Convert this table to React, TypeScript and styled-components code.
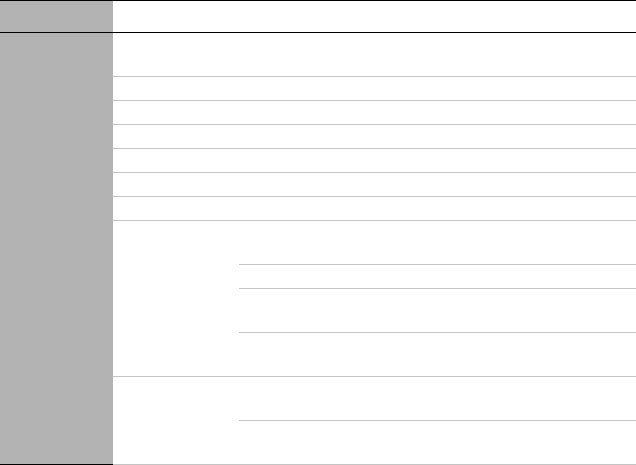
import React from 'react';
import styled, { createGlobalStyle } from 'styled-components';

const GlobalStyle = createGlobalStyle`
  html, body {
    margin: 0;
    padding: 0;
    background: #ffffff;
    font-family: "Liberation Sans", Arial, sans-serif;
  }
`;

const RULE = '#c4c4c4';
const SHADE = '#b3b3b3';

const Table = styled.div`
  width: 636px;
  border-top: 1px solid #000;
  overflow: hidden;
`;

const HeaderRow = styled.div`
  display: grid;
  grid-template-columns: 113px 1fr;
  height: 31px;
  border-bottom: 1px solid #000;
`;

const Shaded = styled.div`
  background: ${SHADE};
`;

const SideCell = styled(Shaded)`
  border-bottom: 1px solid #000;
`;

const Body = styled.div`
  display: grid;
  grid-template-columns: 113px 1fr;
`;

const Rows = styled.div`
  display: flex;
  flex-direction: column;
`;

type RowProps = {
  h: number;
  last?: boolean;
};

const Row = styled.div<RowProps>`
  height: ${props => props.h}px;
  border-bottom: ${props => props.last ? 'none' : `1px solid ${RULE}`};
`;

const Group = styled.div`
  display: grid;
  grid-template-columns: 126px 1fr;
  border-bottom: 1px solid ${RULE};
`;

const SubRows = styled.div`
  display: flex;
  flex-direction: column;
`;

const simpleRows = [43, 23, 23, 23, 23, 23, 23];
const groups = [
  [43, 23, 43, 43],
  [43, 43],
];

export default function App() {
  return (
    <>
      <GlobalStyle />
      <Table>
        <HeaderRow>
          <Shaded />
          <div />
        </HeaderRow>
        <Body>
          <SideCell />
          <Rows>
            {simpleRows.map((h, index) => (
              <Row key={index} h={h} />
            ))}
            {groups.map((sub, gi) => (
              <Group key={gi}>
                <div />
                <SubRows>
                  {sub.map((h, index) => (
                    <Row key={index} h={h} last={index === sub.length - 1} />
                  ))}
                </SubRows>
              </Group>
            ))}
          </Rows>
        </Body>
      </Table>
    </>
  );
}
